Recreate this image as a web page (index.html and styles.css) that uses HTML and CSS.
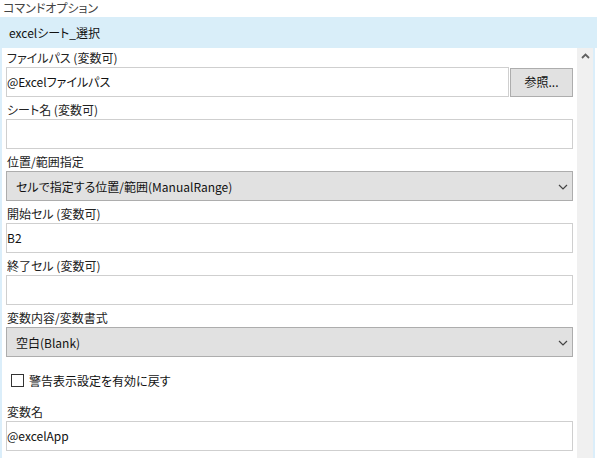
FILE: index.html
```html
<!DOCTYPE html>
<html lang="ja">
<head>
<meta charset="utf-8">
<link rel="stylesheet" href="styles.css">
</head>
<body>
<div class="title">コマンドオプション</div>
<div class="header">excelシート_選択</div>
<div class="main">
  <div class="content">
    <div class="field">
      <div class="label">ファイルパス (変数可)</div>
      <div class="row">
        <div class="input grow">@Excelファイルパス</div>
        <div class="button">参照...</div>
      </div>
    </div>
    <div class="field">
      <div class="label">シート名 (変数可)</div>
      <div class="input"></div>
    </div>
    <div class="field">
      <div class="label">位置/範囲指定</div>
      <div class="select"><span>セルで指定する位置/範囲(ManualRange)</span>
        <svg class="chev" width="10" height="6" viewBox="0 0 10 6"><path d="M1 1 L5 5 L9 1" fill="none" stroke="#444" stroke-width="1.2"/></svg>
      </div>
    </div>
    <div class="field">
      <div class="label">開始セル (変数可)</div>
      <div class="input">B2</div>
    </div>
    <div class="field">
      <div class="label">終了セル (変数可)</div>
      <div class="input"></div>
    </div>
    <div class="field">
      <div class="label">変数内容/変数書式</div>
      <div class="select"><span>空白(Blank)</span>
        <svg class="chev" width="10" height="6" viewBox="0 0 10 6"><path d="M1 1 L5 5 L9 1" fill="none" stroke="#444" stroke-width="1.2"/></svg>
      </div>
    </div>
    <div class="check-row">
      <span class="checkbox"></span>
      <span class="check-label">警告表示設定を有効に戻す</span>
    </div>
    <div class="field">
      <div class="label">変数名</div>
      <div class="input">@excelApp</div>
    </div>
  </div>
  <div class="scrollbar">
    <svg class="up" width="9" height="6" viewBox="0 0 9 6"><path d="M1 5 L4.5 1.5 L8 5" fill="none" stroke="#606060" stroke-width="1.8"/></svg>
  </div>
  <div class="edge"></div>
</div>
</body>
</html>
```
FILE: styles.css
```css
html, body {
  margin: 0;
  padding: 0;
  background: #ffffff;
}
body {
  width: 597px;
  height: 458px;
  overflow: hidden;
  font-family: "Noto Sans CJK JP", "Noto Sans", sans-serif;
  font-size: 12px;
  font-feature-settings: "palt";
  color: #1a1a1a;
}
.title {
  height: 17px;
  line-height: 15px;
  padding-left: 3px;
  color: #444;
}
.header {
  height: 31px;
  line-height: 31px;
  padding-left: 9px;
  background: #d9eef9;
  color: #111;
}
.main {
  display: flex;
  height: 410px;
  padding-right: 2px;
}
.content {
  flex: 1;
  border-left: 2px solid #dbeefa;
  padding: 3px 4px 0 4px;
}
.scrollbar {
  width: 16px;
  background: #f0f0f0;
  display: flex;
  justify-content: center;
  padding-top: 5px;
  box-sizing: border-box;
}
.up {
  display: block;
}
.edge {
  width: 2px;
  background: #dbeefa;
}
.field {
  margin-bottom: 6px;
}
.label {
  height: 16px;
  line-height: 14px;
  padding-left: 1px;
  color: #222;
}
.row {
  display: flex;
  gap: 1px;
}
.grow {
  flex: 1;
}
.input {
  height: 30px;
  box-sizing: border-box;
  border: 1px solid #cfcfcf;
  line-height: 28px;
  padding-left: 0px;
  color: #111;
  background: #fff;
}
.button {
  width: 63px;
  height: 29px;
  margin-top: 1px;
  box-sizing: border-box;
  border: 1px solid #adadad;
  background: #e1e1e1;
  text-align: center;
  line-height: 26px;
  color: #111;
}
.select {
  height: 30px;
  box-sizing: border-box;
  border: 1px solid #adadad;
  background: #e1e1e1;
  display: flex;
  align-items: center;
  justify-content: space-between;
  padding: 0 4px 0 9px;
  color: #111;
}
.chev {
  display: block;
  margin-top: 2px;
}
.check-row {
  height: 42px;
  box-sizing: border-box;
  display: flex;
  align-items: flex-start;
  gap: 5px;
  padding: 11px 0 0 5px;
}
.checkbox {
  width: 13px;
  height: 13px;
  box-sizing: border-box;
  border: 1px solid #333;
  background: #fff;
}
.check-label {
  line-height: 14px;
  color: #111;
}
```
